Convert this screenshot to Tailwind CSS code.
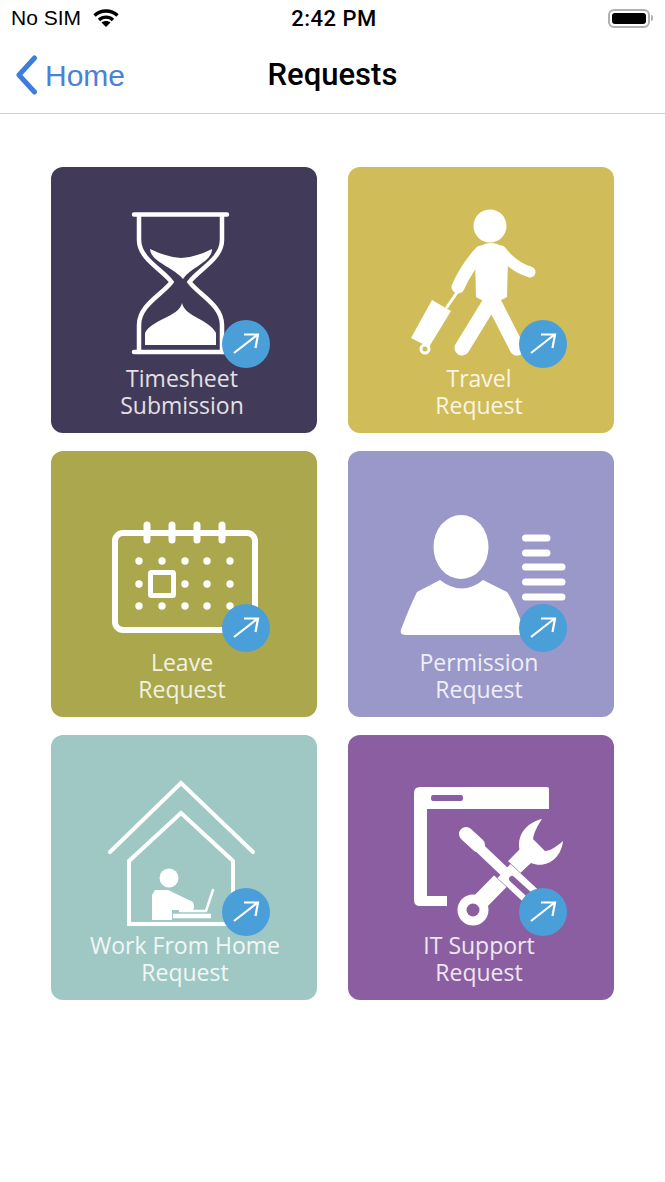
<!DOCTYPE html>
<html lang="en">
<head>
  <meta charset="UTF-8" />
  <meta name="viewport" content="width=device-width, initial-scale=1.0"/>
  <title>Requests</title>
  <script src="https://cdn.jsdelivr.net/npm/@tailwindcss/browser@4"></script>
</head>
<body class="bg-white text-black font-['Liberation_Sans',sans-serif] w-[665px] h-[1182px] overflow-hidden">
  <!-- Status bar -->
  <div class="grid grid-cols-3 items-center h-[36px] pl-[11px] pr-[12px] text-[21px]">
    <div class="flex items-center gap-[12px]">
      <span class="whitespace-nowrap">No SIM</span>
      <svg width="26" height="18" viewBox="0 0 26 18" fill="none" stroke="#000" stroke-width="3.4">
        <path d="M1.500 6.500C8 0.500 18 0.500 24.500 6.500"/>
        <path d="M6 11C10 7.200 16 7.200 20 11"/>
        <path d="M13 18L8.500 13.500C11 11.500 15 11.500 17.500 13.500Z" fill="#000" stroke="none"/>
      </svg>
    </div>
    <div class="text-center pl-[4px] font-['Roboto',sans-serif] font-medium text-[22px] tracking-[0.5px] whitespace-nowrap">2:42 PM</div>
    <div class="flex justify-end items-center">
      <div class="w-[42px] h-[19px] border-2 border-[#b0b0b0] rounded-[6px] p-[2px]">
        <div class="w-full h-full bg-black rounded-[3px]"></div>
      </div>
      <div class="w-[2px] h-[6px] bg-[#b0b0b0] rounded-r-sm ml-[1px]"></div>
    </div>
  </div>

  <!-- Nav bar -->
  <div class="grid grid-cols-3 items-center h-[78px] border-b border-[#cfcfcf] pt-[1px]">
    <div class="flex items-center pl-[15px] gap-[7px] text-[#4a80d8] text-[30px]">
      <svg width="23" height="40" viewBox="0 0 23 40" fill="none" stroke="#3f7ddc" stroke-width="5" stroke-linecap="round" stroke-linejoin="round">
        <path d="M19.500 3L4 20L19.500 37"/>
      </svg>
      <span>Home</span>
    </div>
    <div class="text-center text-[31px] font-['Roboto',sans-serif] font-medium whitespace-nowrap">Requests</div>
  </div>

  <!-- Tiles -->
  <main class="grid grid-cols-[266px_266px] gap-x-[31px] gap-y-[18px] pt-[53px] pl-[51px] font-['Open_Sans',sans-serif] text-[23px] leading-[27px] text-white/85">

    <a class="relative block h-[266px] rounded-[12px] bg-[#413a58] text-center">
      <svg class="block" width="266" height="198" viewBox="0 0 266 198" fill="none" stroke="#fff" stroke-width="4.5" stroke-linecap="round">
        <path d="M83 47.500H176M83 185H176"/>
        <path d="M88 48V73C88 92 112 103 120.500 115C112 127 88 138 88 158V185"/>
        <path d="M171 48V73C171 92 147 103 138.500 115C147 127 171 138 171 158V185"/>
        <path fill="#fff" stroke="none" d="M99 82Q115 90 130 91Q146 90 161 82C161 95 140 100 132 112C122 100 100 95 99 82Z"/>
        <path fill="#fff" stroke="none" d="M131 136C134 150 158 152 165 166V178H94V166C101 152 128 150 131 136Z"/>
      </svg>
      <p class="pr-[4px]">Timesheet<br>Submission</p>
      <svg class="absolute left-[171px] top-[153px]" width="48" height="48" viewBox="0 0 48 48" fill="none" stroke="#fff" stroke-width="2.200"><circle cx="24" cy="24" r="24" fill="#4a9fd8" stroke="none"/><path d="M12 33L35 15M22 14.500H36L33.500 28"/></svg>
    </a>

    <a class="relative block h-[266px] rounded-[12px] bg-[#d0bc58] text-center">
      <svg class="block" width="266" height="198" viewBox="0 0 266 198" fill="none" stroke="#fff" stroke-linecap="round" stroke-linejoin="round">
        <circle cx="142" cy="59" r="16.500" fill="#fff" stroke="none"/>
        <path fill="#fff" stroke="none" d="M127 90Q130 76 143 76Q156 76 160 92L159 130Q143 140 128 130Z"/>
        <path stroke-width="11" d="M153 84Q165 100 182 105"/>
        <path stroke-width="13" d="M133 85Q119 100 110 120"/>
        <path stroke-width="15" d="M144 132L114 181M144 132L169 181"/>
        <path stroke-width="3" d="M99 140L110 124"/>
        <path fill="#fff" stroke="none" d="M63 171L84 133L103 144L81 180Z"/>
        <circle cx="77" cy="182" r="4" fill="none" stroke-width="3"/>
      </svg>
      <p class="pr-[4px]">Travel<br>Request</p>
      <svg class="absolute left-[171px] top-[153px]" width="48" height="48" viewBox="0 0 48 48" fill="none" stroke="#fff" stroke-width="2.200"><circle cx="24" cy="24" r="24" fill="#4a9fd8" stroke="none"/><path d="M12 33L35 15M22 14.500H36L33.500 28"/></svg>
    </a>

    <a class="relative block h-[266px] rounded-[12px] bg-[#aba74c] text-center">
      <svg class="block" width="266" height="198" viewBox="0 0 266 198" fill="none" stroke="#fff" stroke-linecap="round">
        <rect x="64" y="82" width="140" height="97" rx="8" stroke-width="6"/>
        <path stroke-width="7" d="M96 74V89M121 74V89M146 74V89M171 74V89"/>
        <rect x="99.500" y="121.500" width="23" height="23" rx="1" stroke-width="5"/>
        <g fill="#fff" stroke="none">
          <circle cx="88" cy="110" r="3.700"/><circle cx="111" cy="110" r="3.700"/><circle cx="134" cy="110" r="3.700"/><circle cx="156" cy="110" r="3.700"/><circle cx="179" cy="110" r="3.700"/>
          <circle cx="88" cy="133" r="3.700"/><circle cx="134" cy="133" r="3.700"/><circle cx="156" cy="133" r="3.700"/><circle cx="179" cy="133" r="3.700"/>
          <circle cx="88" cy="155" r="3.700"/><circle cx="111" cy="155" r="3.700"/><circle cx="134" cy="155" r="3.700"/><circle cx="156" cy="155" r="3.700"/><circle cx="179" cy="155" r="3.700"/>
        </g>
      </svg>
      <p class="pr-[4px]">Leave<br>Request</p>
      <svg class="absolute left-[171px] top-[153px]" width="48" height="48" viewBox="0 0 48 48" fill="none" stroke="#fff" stroke-width="2.200"><circle cx="24" cy="24" r="24" fill="#4a9fd8" stroke="none"/><path d="M12 33L35 15M22 14.500H36L33.500 28"/></svg>
    </a>

    <a class="relative block h-[266px] rounded-[12px] bg-[#9a97c9] text-center">
      <svg class="block" width="266" height="198" viewBox="0 0 266 198" fill="none" stroke="#fff" stroke-linecap="round">
        <ellipse cx="113" cy="96" rx="27.500" ry="32" fill="#fff" stroke="none"/>
        <path fill="#fff" stroke="none" d="M92 129Q114 146 135 129L159 141Q166 150 178 184H58Q50 184 54 176Q62 155 69 141Z"/>
        <path stroke-width="7" d="M177.500 87H199M177.500 102H199M177.500 116H214M177.500 131H214M177.500 146H214"/>
      </svg>
      <p class="pr-[4px]">Permission<br>Request</p>
      <svg class="absolute left-[171px] top-[153px]" width="48" height="48" viewBox="0 0 48 48" fill="none" stroke="#fff" stroke-width="2.200"><circle cx="24" cy="24" r="24" fill="#4a9fd8" stroke="none"/><path d="M12 33L35 15M22 14.500H36L33.500 28"/></svg>
    </a>

    <a class="relative block h-[265px] rounded-[12px] bg-[#9fc8c4] text-center">
      <svg class="block" width="266" height="197" viewBox="0 0 266 197" fill="none" stroke="#fff" stroke-width="4" stroke-linecap="round">
        <path d="M59 117L130 48L202 117"/>
        <path stroke-linecap="butt" d="M78 189V126L130 78L182 126V189Z"/>
        <circle cx="118" cy="143" r="9.500" fill="#fff" stroke="none"/>
        <path fill="#fff" stroke="none" d="M104 155H117L142 167Q144 172 142 175H121V185H101V160Z"/>
        <path stroke-width="2.500" d="M162 155L155 176H129"/>
        <path stroke-width="4.500" stroke-linecap="butt" d="M122 181H160"/>
      </svg>
      <p class="pl-[2px] whitespace-nowrap">Work From Home<br>Request</p>
      <svg class="absolute left-[171px] top-[153px]" width="48" height="48" viewBox="0 0 48 48" fill="none" stroke="#fff" stroke-width="2.200"><circle cx="24" cy="24" r="24" fill="#4a9fd8" stroke="none"/><path d="M12 33L35 15M22 14.500H36L33.500 28"/></svg>
    </a>

    <a class="relative block h-[265px] rounded-[12px] bg-[#8b5ea1] text-center">
      <svg class="block" width="266" height="197" viewBox="0 0 266 197" fill="none" stroke="#fff" stroke-linecap="round">
        <path fill="#fff" fill-rule="evenodd" stroke="none" d="M72 52H199Q201 52 201 54V74H79V161H99V171H72Q66 171 66 165V58Q66 52 72 52ZM85 60Q83 60 83 63Q83 66 85 66H113Q115 66 115 63Q115 60 113 60Z"/>
        <path stroke-width="17" stroke-linecap="butt" d="M124 175L178 120"/>
        <circle cx="125" cy="175" r="15.500" fill="#fff" stroke="none"/>
        <circle cx="125" cy="175" r="6.500" fill="#8b5ea1" stroke="none"/>
        <path fill="#fff" stroke="none" d="M194 84C177 88 168 102 172 116L160 128L172 138L183 128C198 134 213 124 215 106C208 112 202 116 197 116L185 104C186 97 190 90 194 84Z"/>
        <path stroke="#8b5ea1" stroke-width="20" stroke-linecap="butt" d="M128 110L184 162"/>
        <path stroke-width="14" d="M118 99L130 110"/>
        <path stroke-width="10" stroke-linecap="butt" d="M122 104L160 140"/>
        <path stroke-width="19" stroke-linecap="butt" d="M156 136L186 164"/>
        <path stroke="#8b5ea1" stroke-width="6" d="M164 144L186 164"/>
      </svg>
      <p class="pr-[4px]">IT Support<br>Request</p>
      <svg class="absolute left-[171px] top-[153px]" width="48" height="48" viewBox="0 0 48 48" fill="none" stroke="#fff" stroke-width="2.200"><circle cx="24" cy="24" r="24" fill="#4a9fd8" stroke="none"/><path d="M12 33L35 15M22 14.500H36L33.500 28"/></svg>
    </a>
  </main>
</body>
</html>
